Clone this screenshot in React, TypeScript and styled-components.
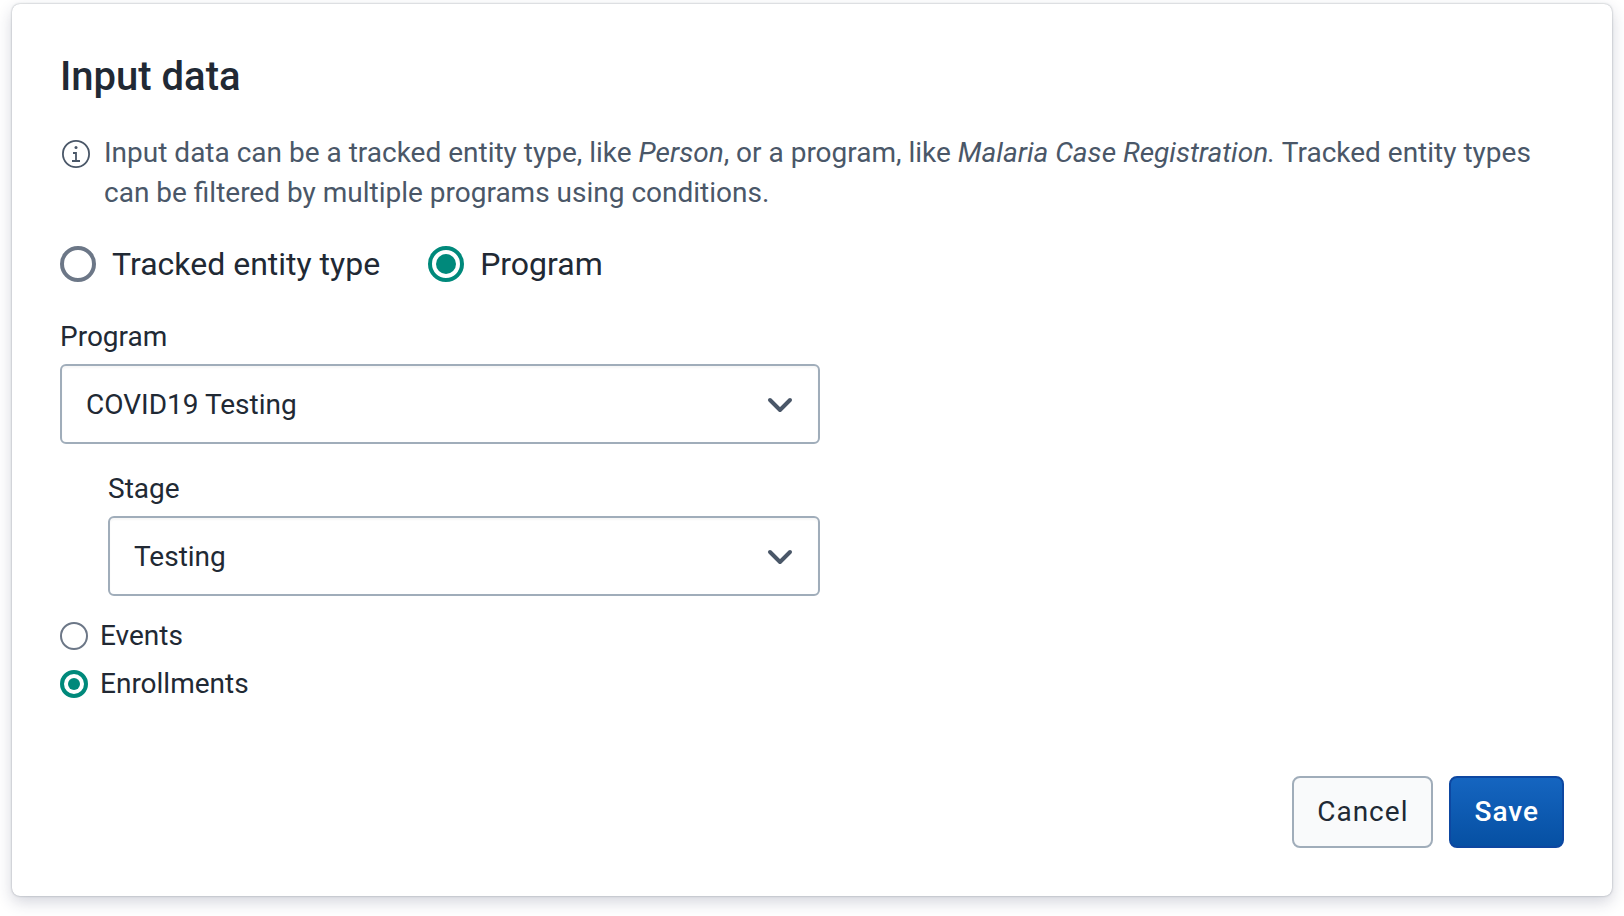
import React, { useState } from "react";
import styled, { createGlobalStyle, css } from "styled-components";

const GlobalStyle = createGlobalStyle`
  *, *::before, *::after { box-sizing: border-box; }
  body {
    margin: 0;
    background: #ffffff;
    color: #212934;
    font-family: Roboto, "Liberation Sans", sans-serif;
    font-size: 28px;
    line-height: 40px;
  }
`;

const Page = styled.main`
  padding: 4px 12px 20px;
`;

const Card = styled.section`
  padding: 48px;
  background: #ffffff;
  border-radius: 8px;
  box-shadow:
    0 0 2px rgba(64, 75, 90, 0.5),
    0 6px 16px rgba(33, 41, 80, 0.2);
`;

const Title = styled.h1`
  margin: 0 0 31px;
  font-size: 40px;
  line-height: 50px;
  font-weight: 500;
`;

const Info = styled.div`
  display: flex;
  align-items: flex-start;
  gap: 12px;
  margin-bottom: 31px;
  color: #4a5768;

  svg {
    flex: none;
    margin-top: 5px;
  }
`;

const InfoText = styled.p`
  margin: 0;
`;

const RadioGroup = styled.fieldset<{ $vertical?: boolean }>`
  display: flex;
  flex-direction: ${(p) => (p.$vertical ? "column" : "row")};
  align-items: flex-start;
  gap: ${(p) => (p.$vertical ? "8px" : "48px")};
  margin: 0;
  padding: 0;
  border: 0;
`;

const RadioLabel = styled.label<{ $large?: boolean }>`
  display: flex;
  align-items: center;
  gap: ${(p) => (p.$large ? "16px" : "12px")};
  font-size: ${(p) => (p.$large ? "32px" : "28px")};
  line-height: 40px;
  cursor: pointer;
`;

const radioSize = (size: number, ring: number, dot: number) => css`
  width: ${size}px;
  height: ${size}px;
  border-width: ${ring}px;

  &::before {
    width: ${dot}px;
    height: ${dot}px;
  }
`;

const RadioInput = styled.input<{ $large?: boolean }>`
  appearance: none;
  display: grid;
  place-items: center;
  flex: none;
  margin: 0;
  border: 2px solid #6c7787;
  border-radius: 50%;
  background: #ffffff;
  cursor: pointer;

  &::before {
    content: "";
    border-radius: 50%;
  }

  ${(p) => (p.$large ? radioSize(36, 4, 20) : radioSize(28, 2, 12))}

  &:checked {
    border-color: #00897b;
    border-width: 4px;
  }

  &:checked::before {
    background: #00897b;
  }
`;

const Fields = styled.div`
  display: flex;
  flex-direction: column;
  gap: 24px;
  max-width: 760px;
  margin: 32px 0 20px;
`;

const Field = styled.div<{ $nested?: boolean }>`
  display: flex;
  flex-direction: column;
  gap: 6px;
  margin-left: ${(p) => (p.$nested ? "48px" : "0")};
`;

const FieldLabel = styled.label`
  line-height: 42px;
`;

const SelectBox = styled.div`
  display: grid;
  align-items: center;

  > * {
    grid-area: 1 / 1;
  }

  svg {
    justify-self: end;
    margin-right: 24px;
    pointer-events: none;
  }
`;

const Select = styled.select`
  appearance: none;
  width: 100%;
  height: 80px;
  padding: 2px 64px 0 24px;
  border: 2px solid #a0adba;
  border-radius: 6px;
  background: #ffffff;
  box-shadow: inset 0 2px 2px rgba(48, 54, 60, 0.04);
  color: inherit;
  font: inherit;
  cursor: pointer;
`;

const Actions = styled.footer`
  display: flex;
  justify-content: flex-end;
  gap: 16px;
  margin-top: 72px;
`;

const Button = styled.button<{ $primary?: boolean }>`
  height: 72px;
  padding: 0 23px;
  border: 2px solid #a0adba;
  border-radius: 8px;
  background: #f9fafb;
  color: #212934;
  font: inherit;
  letter-spacing: 1px;
  cursor: pointer;

  ${(p) =>
    p.$primary &&
    css`
      border-color: #0d47a1;
      background: linear-gradient(180deg, #1565c0 0%, #0650a3 100%);
      color: #ffffff;
      font-weight: 500;
    `}
`;

const InfoIcon = () => (
  <svg width="32" height="32" viewBox="0 0 32 32" fill="none" aria-hidden="true">
    <circle cx="16" cy="16" r="13.1" stroke="currentColor" strokeWidth="1.8" />
    <circle cx="16" cy="9.5" r="1.5" fill="currentColor" />
    <path d="M13 15h3v8M12 23h8" stroke="currentColor" strokeWidth="1.8" />
  </svg>
);

const Chevron = () => (
  <svg width="32" height="32" viewBox="0 0 32 32" fill="none" aria-hidden="true">
    <path
      d="M6 12l10 10 10-10"
      stroke="#4a5768"
      strokeWidth="4"
      strokeLinecap="round"
      strokeLinejoin="round"
    />
  </svg>
);

interface RadioProps {
  name: string;
  label: string;
  large?: boolean;
  checked: boolean;
  onSelect: () => void;
}

const Radio = ({ name, label, large, checked, onSelect }: RadioProps) => (
  <RadioLabel $large={large}>
    <RadioInput type="radio" name={name} $large={large} checked={checked} onChange={onSelect} />
    {label}
  </RadioLabel>
);

interface SelectFieldProps {
  id: string;
  label: string;
  value: string;
  nested?: boolean;
}

const SelectField = ({ id, label, value, nested }: SelectFieldProps) => (
  <Field $nested={nested}>
    <FieldLabel htmlFor={id}>{label}</FieldLabel>
    <SelectBox>
      <Select id={id} defaultValue={value}>
        <option>{value}</option>
      </Select>
      <Chevron />
    </SelectBox>
  </Field>
);

export default function App() {
  const [source, setSource] = useState("Program");
  const [output, setOutput] = useState("Enrollments");

  return (
    <Page>
      <GlobalStyle />
      <Card>
        <Title>Input data</Title>
        <Info>
          <InfoIcon />
          <InfoText>
            Input data can be a tracked entity type, like <em>Person</em>, or a program, like{" "}
            <em>Malaria Case Registration.</em> Tracked entity types can be filtered by multiple
            programs using conditions.
          </InfoText>
        </Info>
        <RadioGroup>
          {["Tracked entity type", "Program"].map((label) => (
            <Radio
              key={label}
              name="source"
              label={label}
              large
              checked={source === label}
              onSelect={() => setSource(label)}
            />
          ))}
        </RadioGroup>
        <Fields>
          <SelectField id="program" label="Program" value="COVID19 Testing" />
          <SelectField id="stage" label="Stage" value="Testing" nested />
        </Fields>
        <RadioGroup $vertical>
          {["Events", "Enrollments"].map((label) => (
            <Radio
              key={label}
              name="output"
              label={label}
              checked={output === label}
              onSelect={() => setOutput(label)}
            />
          ))}
        </RadioGroup>
        <Actions>
          <Button type="button">Cancel</Button>
          <Button type="submit" $primary>
            Save
          </Button>
        </Actions>
      </Card>
    </Page>
  );
}
